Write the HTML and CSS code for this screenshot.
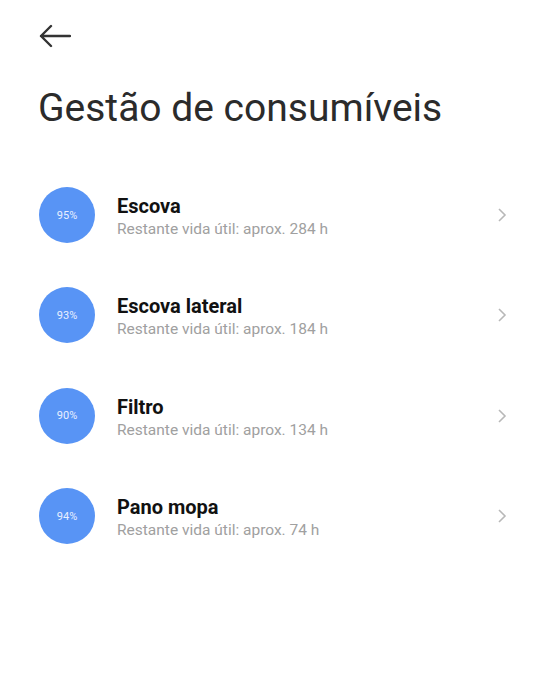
FILE: index.html
```html
<!DOCTYPE html>
<html>
<head>
    <title>Gestão de consumíveis</title>
    <link rel="stylesheet" href="styles.css">
</head>
<body>
    <div class="page">
        <div class="topbar">
            <svg class="back" width="32" height="24" viewBox="0 0 32 24">
                <path d="M31 12H2M12 2L2 12l10 10" fill="none" stroke="#333" stroke-width="2.4" stroke-linecap="round" stroke-linejoin="round"/>
            </svg>
        </div>
        <h1 class="title">Gestão de consumíveis</h1>

        <div class="list">
            <div class="item">
                <div class="badge">95%</div>
                <div class="info">
                    <div class="name">Escova</div>
                    <div class="desc">Restante vida útil: aprox. 284 h</div>
                </div>
                <svg class="chev" width="10" height="16" viewBox="0 0 10 16"><path d="M2 2l6 6-6 6" fill="none" stroke="#b8b8b8" stroke-width="1.6"/></svg>
            </div>
            <div class="item">
                <div class="badge">93%</div>
                <div class="info">
                    <div class="name">Escova lateral</div>
                    <div class="desc">Restante vida útil: aprox. 184 h</div>
                </div>
                <svg class="chev" width="10" height="16" viewBox="0 0 10 16"><path d="M2 2l6 6-6 6" fill="none" stroke="#b8b8b8" stroke-width="1.6"/></svg>
            </div>
            <div class="item">
                <div class="badge">90%</div>
                <div class="info">
                    <div class="name">Filtro</div>
                    <div class="desc">Restante vida útil: aprox. 134 h</div>
                </div>
                <svg class="chev" width="10" height="16" viewBox="0 0 10 16"><path d="M2 2l6 6-6 6" fill="none" stroke="#b8b8b8" stroke-width="1.6"/></svg>
            </div>
            <div class="item">
                <div class="badge">94%</div>
                <div class="info">
                    <div class="name">Pano mopa</div>
                    <div class="desc">Restante vida útil: aprox. 74 h</div>
                </div>
                <svg class="chev" width="10" height="16" viewBox="0 0 10 16"><path d="M2 2l6 6-6 6" fill="none" stroke="#b8b8b8" stroke-width="1.6"/></svg>
            </div>
        </div>
    </div>
</body>
</html>
```

FILE: styles.css
```css
/* page */
body {
    margin: 0;
    padding: 0;
    background-color: #fff;
    font-family: Roboto, "Liberation Sans", Arial, sans-serif;
}

.page {
    padding: 0 0 0 38px;
}

.topbar {
    height: 72px;
    display: flex;
    align-items: center;
}

.back {
    display: block;
    margin-left: 1px;
}

.title {
    margin: 11px 0 0 0;
    font-size: 39px;
    font-weight: 400;
    color: #2b2b2b;
    line-height: 50px;
}

/* consumables list */
.list {
    margin-top: 32px;
}

.item {
    display: flex;
    align-items: center;
    height: 100.3px;
    padding-right: 42px;
}

.badge {
    width: 56px;
    height: 56px;
    border-radius: 50%;
    background-color: #5894f5;
    color: #e8f0ff;
    font-size: 11px;
    display: flex;
    align-items: center;
    justify-content: center;
    flex-shrink: 0;
    margin-left: 1px;
}

.info {
    flex: 1;
    margin-left: 22px;
    padding-top: 4px;
}

.name {
    font-size: 20px;
    font-weight: 700;
    color: #111;
    line-height: 24px;
}

.desc {
    font-size: 15.5px;
    color: #a0a0a0;
    line-height: 21px;
    margin-top: 1px;
}

.chev {
    display: block;
}
```
